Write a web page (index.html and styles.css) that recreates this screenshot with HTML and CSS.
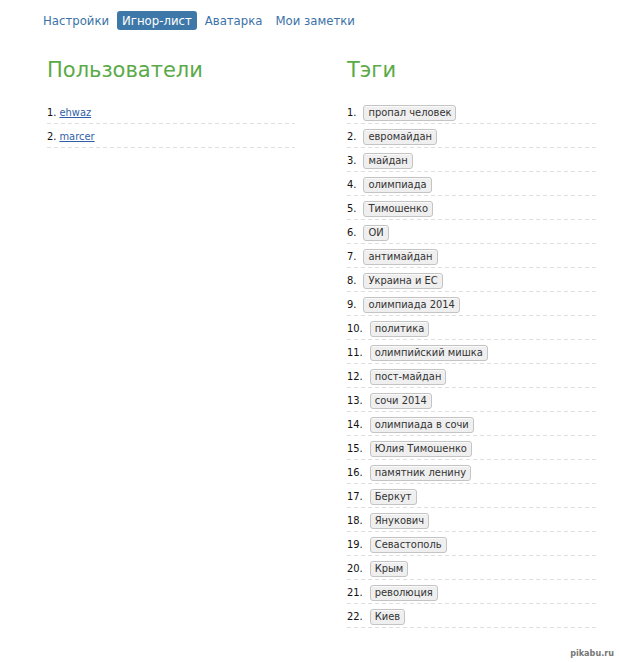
FILE: index.html
```html
<!DOCTYPE html>
<html>
<head>
<meta charset="utf-8">
<link rel="stylesheet" href="styles.css">
</head>
<body>
<nav class="nav">
  <a class="nav-item" href="#">Настройки</a>
  <a class="nav-item active" href="#">Игнор-лист</a>
  <a class="nav-item" href="#">Аватарка</a>
  <a class="nav-item" href="#">Мои заметки</a>
</nav>
<main class="columns">
  <section class="col">
    <h2 class="title">Пользователи</h2>
    <ol class="list">
      <li class="row"><span class="num">1.</span> <a class="user" href="#">ehwaz</a></li>
      <li class="row"><span class="num">2.</span> <a class="user" href="#">marcer</a></li>
    </ol>
  </section>
  <section class="col">
    <h2 class="title">Тэги</h2>
    <ol class="list tags">
      <li class="row"><span class="num">1.</span><span class="tag">пропал человек</span></li>
      <li class="row"><span class="num">2.</span><span class="tag">евромайдан</span></li>
      <li class="row"><span class="num">3.</span><span class="tag">майдан</span></li>
      <li class="row"><span class="num">4.</span><span class="tag">олимпиада</span></li>
      <li class="row"><span class="num">5.</span><span class="tag">Тимошенко</span></li>
      <li class="row"><span class="num">6.</span><span class="tag">ОИ</span></li>
      <li class="row"><span class="num">7.</span><span class="tag">антимайдан</span></li>
      <li class="row"><span class="num">8.</span><span class="tag">Украина и ЕС</span></li>
      <li class="row"><span class="num">9.</span><span class="tag">олимпиада 2014</span></li>
      <li class="row"><span class="num">10.</span><span class="tag">политика</span></li>
      <li class="row"><span class="num">11.</span><span class="tag">олимпийский мишка</span></li>
      <li class="row"><span class="num">12.</span><span class="tag">пост-майдан</span></li>
      <li class="row"><span class="num">13.</span><span class="tag">сочи 2014</span></li>
      <li class="row"><span class="num">14.</span><span class="tag">олимпиада в сочи</span></li>
      <li class="row"><span class="num">15.</span><span class="tag">Юлия Тимошенко</span></li>
      <li class="row"><span class="num">16.</span><span class="tag">памятник ленину</span></li>
      <li class="row"><span class="num">17.</span><span class="tag">Беркут</span></li>
      <li class="row"><span class="num">18.</span><span class="tag">Янукович</span></li>
      <li class="row"><span class="num">19.</span><span class="tag">Севастополь</span></li>
      <li class="row"><span class="num">20.</span><span class="tag">Крым</span></li>
      <li class="row"><span class="num">21.</span><span class="tag">революция</span></li>
      <li class="row"><span class="num">22.</span><span class="tag">Киев</span></li>
    </ol>
  </section>
</main>
<div class="watermark">pikabu.ru</div>
</body>
</html>
```

FILE: styles.css
```css
html, body {
  margin: 0;
  padding: 0;
  background: #ffffff;
}
body {
  font-family: "DejaVu Sans Condensed", "DejaVu Sans", Verdana, sans-serif;
  color: #111;
  width: 619px;
  height: 662px;
  position: relative;
  overflow: hidden;
}
.nav {
  display: flex;
  padding: 11px 0 0 38px;
  height: 19px;
}
.nav-item {
  font-size: 13px;
  line-height: 19px;
  padding: 0 5px;
  margin-right: 3px;
  color: #3b73a8;
  text-decoration: none;
  border-radius: 3px;
}
.nav-item.active {
  background: #3e78a8;
  color: #ffffff;
}
.columns {
  display: grid;
  grid-template-columns: 248px 251px;
  column-gap: 52px;
  padding: 0 0 0 47px;
}
.title {
  font-family: "DejaVu Sans", Verdana, sans-serif;
  font-weight: normal;
  font-size: 21px;
  line-height: 24px;
  color: #5aaa48;
  margin: 28px 0 18px 0;
}
.list {
  list-style: none;
  margin: 0;
  padding: 0;
}
.row {
  font-size: 11px;
  display: flex;
  align-items: center;
  padding-top: 1px;
  box-sizing: border-box;
  height: 24px;
  background: repeating-linear-gradient(to right, #dedede 0 4px, transparent 4px 7px) bottom / 100% 1px no-repeat;
}
.num {
  color: #111;
  margin-right: 3px;
}
.user {
  color: #2f5fa8;
  text-decoration: underline;
}
.tags .num {
  margin-right: 7px;
}
.tag {
  display: inline-block;
  background: #efefef;
  border: 1px solid #c4c4c4;
  border-radius: 3px;
  color: #333;
  padding: 0 4px;
  line-height: 14px;
  box-shadow: inset 0 1px 0 #fafafa;
}
.watermark {
  position: absolute;
  right: 5px;
  bottom: 4px;
  font-family: "DejaVu Sans Condensed", "DejaVu Sans", sans-serif;
  font-weight: bold;
  font-size: 9px;
  color: #777;
  text-shadow: 1px 0 #fff, -1px 0 #fff, 0 1px #fff, 0 -1px #fff;
}
```
